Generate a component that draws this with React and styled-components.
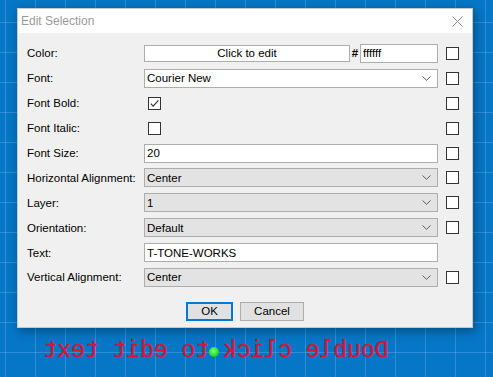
import styled, { createGlobalStyle } from 'styled-components';

const GlobalStyle = createGlobalStyle`
  html, body {
    margin: 0;
    padding: 0;
  }
  body {
    font-family: 'Liberation Sans', Arial, sans-serif;
  }
`;

const rows = [
  { label: 'Color:', kind: 'color' },
  { label: 'Font:', kind: 'select', value: 'Courier New', white: true },
  { label: 'Font Bold:', kind: 'check', checked: true },
  { label: 'Font Italic:', kind: 'check' },
  { label: 'Font Size:', kind: 'input', value: '20' },
  { label: 'Horizontal Alignment:', kind: 'select', value: 'Center' },
  { label: 'Layer:', kind: 'select', value: '1' },
  { label: 'Orientation:', kind: 'select', value: 'Default' },
  { label: 'Text:', kind: 'input', value: 'T-TONE-WORKS', noApply: true },
  { label: 'Vertical Alignment:', kind: 'select', value: 'Center' },
];

function Chevron() {
  return (
    <svg width="9" height="5" viewBox="0 0 9 5">
      <path d="M0.5 0.5 L4.5 4.3 L8.5 0.5" fill="none" stroke="#606060" strokeWidth="1" />
    </svg>
  );
}

function Check() {
  return (
    <svg width="11" height="11" viewBox="0 0 11 11">
      <path d="M1.8 5.6 L4.2 8.2 L9.4 2.4" fill="none" stroke="#333" strokeWidth="1.2" />
    </svg>
  );
}

function Control({ row }) {
  if (row.kind === 'color') {
    return (
      <ColorGroup>
        <ColorButton>Click to edit</ColorButton>
        <Hash>#</Hash>
        <Field $w="78px">ffffff</Field>
      </ColorGroup>
    );
  }
  if (row.kind === 'select') {
    return (
      <Dropdown $white={row.white}>
        <span>{row.value}</span>
        <Chevron />
      </Dropdown>
    );
  }
  if (row.kind === 'check') {
    return <CheckBox $inline>{row.checked && <Check />}</CheckBox>;
  }
  return <Field>{row.value}</Field>;
}

export default function App() {
  return (
    <Desktop>
      <GlobalStyle />
      <CanvasText>Double click to edit text</CanvasText>
      <Anchor />
      <Dialog>
        <TitleBar>
          <Title>Edit Selection</Title>
          <svg width="11" height="11" viewBox="0 0 11 11">
            <path d="M0.5 0.5 L10.5 10.5 M10.5 0.5 L0.5 10.5" stroke="#8a8a8a" strokeWidth="1" />
          </svg>
        </TitleBar>
        <Form>
          {rows.map((row) => (
            <Row key={row.label}>
              <Label>{row.label}</Label>
              <Control row={row} />
              {row.noApply ? <span /> : <CheckBox />}
            </Row>
          ))}
        </Form>
        <Footer>
          <Button $primary $w="47px">OK</Button>
          <Button $w="64px">Cancel</Button>
        </Footer>
      </Dialog>
    </Desktop>
  );
}

const Desktop = styled.div`
  position: relative;
  width: 100vw;
  height: 100vh;
  overflow: hidden;
  background-color: #0676c6;
  background-image: linear-gradient(to right, rgba(110, 175, 230, 0.4) 1px, transparent 1px),
    linear-gradient(to bottom, rgba(110, 175, 230, 0.4) 1px, transparent 1px);
  background-size: 30px 30px;
  background-position: 5px 22px;
`;

const CanvasText = styled.div`
  position: absolute;
  left: 42px;
  top: 340px;
  width: 348px;
  font-family: 'Liberation Mono', 'Courier New', monospace;
  font-size: 23px;
  line-height: 23px;
  color: #d2163c;
  -webkit-text-stroke: 0.5px #d2163c;
  white-space: nowrap;
  text-align: center;
  transform: scaleX(-1);
`;

const Anchor = styled.div`
  position: absolute;
  left: 209px;
  top: 347px;
  width: 10px;
  height: 10px;
  border-radius: 50%;
  background: radial-gradient(circle at 45% 40%, #7dff7d, #16d616 70%);
`;

const Dialog = styled.div`
  position: absolute;
  left: 17px;
  top: 8px;
  width: 456px;
  height: 320px;
  box-sizing: border-box;
  background: #f0f0f0;
  border: 1px solid #c8c8c8;
  box-shadow: 2px 3px 10px rgba(0, 0, 0, 0.35);
  display: flex;
  flex-direction: column;
`;

const TitleBar = styled.div`
  height: 24px;
  background: #ffffff;
  display: flex;
  align-items: center;
  justify-content: space-between;
  padding: 0 9px 0 3px;
`;

const Title = styled.div`
  font-size: 12px;
  color: #9a9a9a;
`;

const Form = styled.div`
  display: flex;
  flex-direction: column;
  padding: 8px 0 0 9px;
`;

const Row = styled.div`
  display: grid;
  grid-template-columns: 117px 294px 21px;
  height: 24.9px;
  align-items: center;
`;

const Label = styled.div`
  font-size: 11.5px;
  color: #000;
  white-space: nowrap;
`;

const controlBase = `
  box-sizing: border-box;
  height: 19px;
  border: 1px solid #adadad;
  font-size: 11.5px;
  color: #000;
  display: flex;
  align-items: center;
  padding: 0 6px 0 2px;
  white-space: nowrap;
`;

const Field = styled.div`
  ${controlBase}
  width: ${(p) => p.$w || '100%'};
  background: #ffffff;
`;

const Dropdown = styled.div`
  ${controlBase}
  width: 100%;
  justify-content: space-between;
  background: ${(p) => (p.$white ? '#ffffff' : '#e3e3e3')};
`;

const ColorGroup = styled.div`
  display: flex;
  align-items: center;
`;

const ColorButton = styled.div`
  box-sizing: border-box;
  width: 206px;
  height: 17px;
  border: 1px solid #adadad;
  background: #ffffff;
  font-size: 11.5px;
  display: flex;
  align-items: center;
  justify-content: center;
`;

const Hash = styled.span`
  width: 10px;
  text-align: center;
  font-size: 11.5px;
  font-weight: bold;
`;

const CheckBox = styled.div`
  box-sizing: border-box;
  width: 13px;
  height: 13px;
  border: 1px solid #333;
  background: #fff;
  justify-self: ${(p) => (p.$inline ? 'start' : 'end')};
  margin-left: ${(p) => (p.$inline ? '4px' : '0')};
  display: flex;
  align-items: center;
  justify-content: center;
`;

const Footer = styled.div`
  display: flex;
  justify-content: center;
  gap: 7px;
  margin-top: 12px;
`;

const Button = styled.div`
  box-sizing: border-box;
  width: ${(p) => p.$w};
  height: 19px;
  background: #e1e1e1;
  border: ${(p) => (p.$primary ? '2px solid #0078d7' : '1px solid #adadad')};
  font-size: 11.5px;
  display: flex;
  align-items: center;
  justify-content: center;
`;
